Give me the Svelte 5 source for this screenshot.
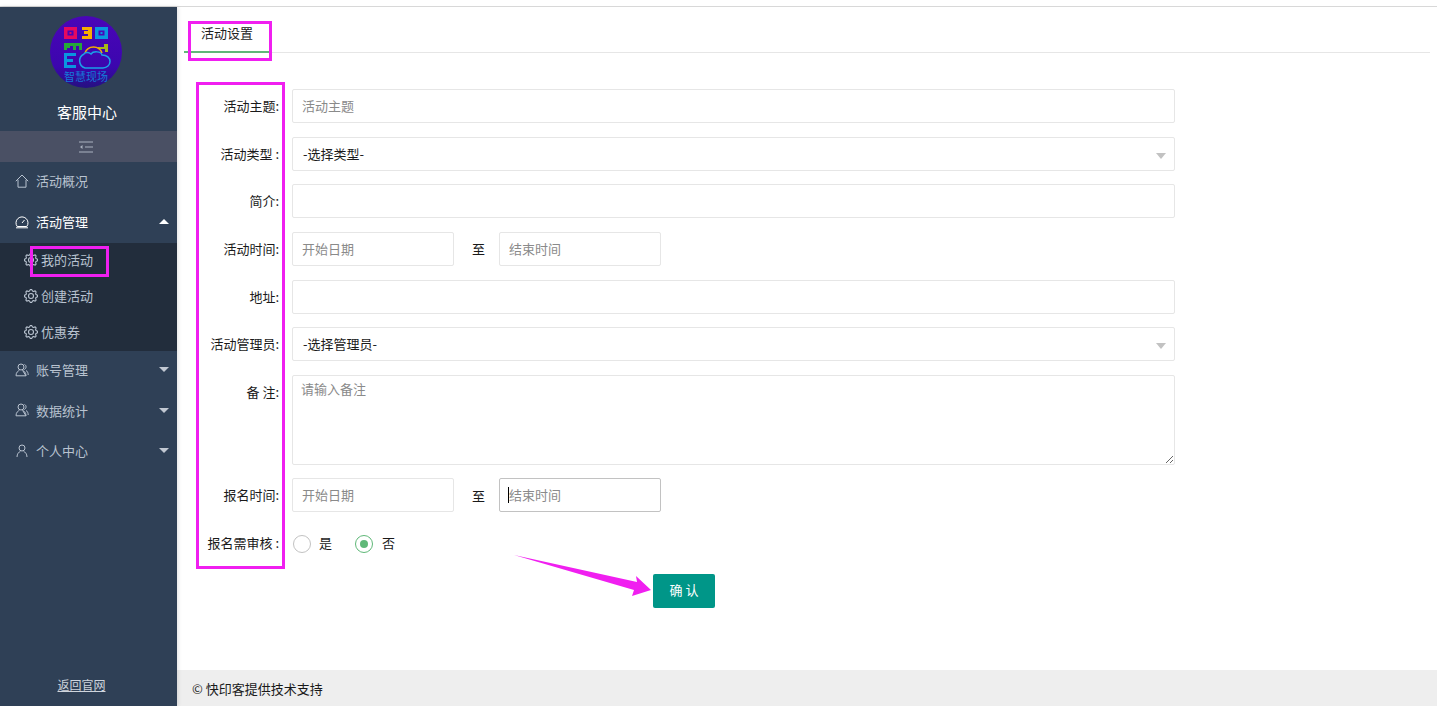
<script>
  const subItems = ['我的活动', '创建活动', '优惠券'];
  const lowerItems = [
    { name: '账号管理', icon: 'users' },
    { name: '数据统计', icon: 'users' },
    { name: '个人中心', icon: 'user' }
  ];

  // outline of a small gear, 8 teeth
  function gearPath() {
    let d = '';
    const n = 8;
    for (let i = 0; i < n * 4; i++) {
      const r = i % 4 < 2 ? 6.6 : 5.2;
      const a = ((i - 0.5) / (n * 4)) * Math.PI * 2;
      d += (i ? 'L' : 'M') + (7 + r * Math.cos(a)).toFixed(2) + ' ' + (7 + r * Math.sin(a)).toFixed(2);
    }
    return d + 'Z';
  }
  const gear = gearPath();
</script>

{#snippet icon(kind)}
  <svg class="icon" viewBox="0 0 14 14" width="14" height="14" fill="none" stroke="currentColor" stroke-width="1">
    {#if kind === 'home'}
      <path d="M.8 7.200 7 1 13.200 7.200M3 5.800v7.400h8V5.800" />
    {:else if kind === 'gauge'}
      <path d="M2.200 11.500a6 6 0 1 1 9.600 0ZM7 8l2.500-3" />
      <path d="M1 12.800h12" />
    {:else if kind === 'users'}
      <circle cx="6" cy="4" r="3" />
      <path d="M1 12.800c0-3.400 2-4.800 3.400-5.400M7.600 7.400c1.400.6 3.400 2 3.400 5.400ZM9.500 1.500c2 .6 2.200 4-.2 5M11 7.500c1.400.6 2.200 2.400 2.200 4.500" />
      <path d="M1 12.800h10" />
    {:else if kind === 'user'}
      <circle cx="7" cy="4" r="3" />
      <path d="M2 13c0-3.200 1.800-5 3.400-5.600M12 13c0-3.200-1.800-5-3.400-5.600" />
    {/if}
  </svg>
{/snippet}

<div class="page">
  <div class="topline"></div>
  <div class="body">
    <aside class="sidebar">
      <div class="logo">
        <svg viewBox="0 0 72 72" width="72" height="72">
          <defs>
            <linearGradient id="disc" x1="0" y1="0" x2="0" y2="1">
              <stop offset="0" stop-color="#4a05b8" />
              <stop offset="0.7" stop-color="#3c06ae" />
              <stop offset="1" stop-color="#251080" />
            </linearGradient>
          </defs>
          <circle cx="36" cy="36" r="36" fill="url(#disc)" />
          <path d="M14 11h13v12H14Z" fill="#e6095f" />
          <path d="M17.500 14.500h6v5h-6Z" fill="#4a05b8" />
          <path d="M19.500 16h2v2h-2Z" fill="#e6095f" />
          <path d="M32 11h10v12H32v-3h6v-2h-4v-3h4v-1h-6Z" fill="#f8ac00" />
          <path d="M45 11h13v12H45Z" fill="#0a96e0" />
          <path d="M48.500 14.500h6v5h-6Z" fill="#4a05b8" />
          <path d="M50.500 16h2v2h-2Z" fill="#0a96e0" />
          <path d="M14 27h18v7h-3v-4h-3v4h-3v-4h-3v2h-3v2h-3Z" fill="#25a838" />
          <path d="M48 31h6v-3h4v8h-3v-3h-7Z" fill="#a5b818" />
          <path d="M14 37h12v3h-9v3h6v3h-6v3h9v3H14Z" fill="#0a96e0" />
          <path d="M35 37a9 9 0 0 1 17 0" fill="none" stroke="#f8ac00" stroke-width="1.500" />
          <path d="M35 52a7.500 7.500 0 0 1-1-14c1-2 5-2 7 0 2-3 10-3 11 1 5 0 8 3 8 6.500S57 52 53 52Z" fill="none" stroke="#1aa0e8" stroke-width="1.500" />
          <text x="36" y="65" class="logo-text">智慧现场</text>
        </svg>
      </div>
      <div class="brand">客服中心</div>
      <div class="toggle">
        <svg viewBox="0 0 14 12" width="14" height="12" fill="none" stroke="#aab2bf" stroke-width="1.200">
          <path d="M0 1h14M6 6h8M0 11h14" />
          <path d="M3.500 4 1 6l2.500 2Z" fill="#aab2bf" stroke="none" />
        </svg>
      </div>

      <nav class="menu">
        <div class="item first">{@render icon('home')}<span>活动概况</span></div>
        <div class="item open">
          {@render icon('gauge')}<span>活动管理</span><i class="caret up"></i>
        </div>
        <div class="sub">
          {#each subItems as name}
            <div class="sub-item">
              <svg class="icon" viewBox="0 0 14 14" width="14" height="14" fill="none" stroke="currentColor" stroke-width="1.100">
                <path d={gear} stroke-linejoin="round" />
                <circle cx="7" cy="7" r="2.500" />
              </svg>
              <span>{name}</span>
            </div>
          {/each}
        </div>
        {#each lowerItems as entry}
          <div class="item">{@render icon(entry.icon)}<span>{entry.name}</span><i class="caret"></i></div>
        {/each}
      </nav>

      <a class="back" href="#top">返回官网</a>
    </aside>

    <main class="main">
      <div class="content">
        <div class="tabs">
          <div class="tab">活动设置</div>
        </div>

        <form class="form" on:submit|preventDefault>
          <div class="row">
            <span class="label">活动主题:</span>
            <input class="field" placeholder="活动主题" />
          </div>
          <div class="row">
            <span class="label">活动类型 :</span>
            <div class="select field">-选择类型-</div>
          </div>
          <div class="row">
            <span class="label">简介:</span>
            <input class="field" />
          </div>
          <div class="row">
            <span class="label">活动时间:</span>
            <input class="field date" placeholder="开始日期" />
            <span class="to">至</span>
            <input class="field date" placeholder="结束时间" />
          </div>
          <div class="row">
            <span class="label">地址:</span>
            <input class="field" />
          </div>
          <div class="row">
            <span class="label">活动管理员:</span>
            <div class="select field">-选择管理员-</div>
          </div>
          <div class="row">
            <span class="label top">备 注:</span>
            <textarea class="field area" placeholder="请输入备注"></textarea>
          </div>
          <div class="row">
            <span class="label">报名时间:</span>
            <input class="field date" placeholder="开始日期" />
            <span class="to">至</span>
            <div class="focused">
              <input class="field date active" placeholder="结束时间" />
              <span class="cursor"></span>
            </div>
          </div>
          <div class="row radios">
            <span class="label">报名需审核 :</span>
            <span class="radio"></span><span class="radio-text">是</span>
            <span class="radio on"></span><span class="radio-text">否</span>
          </div>
          <div class="actions">
            <button class="submit" type="submit">确 认</button>
          </div>
        </form>
      </div>

      <footer class="footer">© 快印客提供技术支持</footer>
    </main>
  </div>

  <!-- annotations lying over the page -->
  <div class="mark mark-tab"></div>
  <div class="mark mark-labels"></div>
  <div class="mark mark-sub"></div>
  <svg class="arrow" viewBox="0 0 1437 706" width="1437" height="706">
    <path d="M514 555 637 582 636 576 651 590 632 596 634 590Z" fill="#f01ff0" />
  </svg>
</div>

<style>
  :global(body) {
    margin: 0;
    overflow: hidden;
    background: #fff;
  }

  .page {
    position: relative;
    height: 706px;
    display: flex;
    flex-direction: column;
    font-family: 'Noto Sans CJK SC', 'Noto Sans', sans-serif;
    font-size: 13px;
    color: #222;
  }

  .topline {
    height: 6px;
    flex: none;
    border-bottom: 1px solid #d8d8d8;
  }

  .body {
    flex: 1;
    display: flex;
    min-height: 0;
  }

  .sidebar {
    width: 177px;
    flex: none;
    display: flex;
    flex-direction: column;
    background: #2f4056;
    box-shadow: 1px 0 4px rgba(0, 0, 0, 0.12);
    position: relative;
    color: #b9c3d0;
  }

  .logo {
    display: flex;
    justify-content: center;
    padding: 9px 5px 0 0;
    height: 72px;
  }

  .logo-text {
    font-size: 11px;
    fill: #1478d8;
    text-anchor: middle;
  }

  .brand {
    margin-top: 14px;
    height: 29px;
    line-height: 20px;
    padding-right: 3px;
    text-align: center;
    font-size: 15px;
    color: #fff;
  }

  .toggle {
    height: 31px;
    display: flex;
    align-items: center;
    justify-content: center;
    padding-right: 5px;
    background: #4a5064;
  }

  .menu {
    display: flex;
    flex-direction: column;
  }

  .item {
    height: 40.500px;
    box-sizing: border-box;
    display: flex;
    align-items: center;
    padding: 0 8px 3px 15px;
    gap: 7px;
  }

  .item.first {
    height: 41px;
    padding-bottom: 4px;
  }

  .item.open {
    height: 40px;
    color: #fff;
  }

  .item span,
  .sub-item span {
    flex: none;
  }

  .icon {
    flex: none;
  }

  .caret {
    margin-left: auto;
    border: 5.500px solid transparent;
    border-top-color: #c2c8d2;
    border-bottom-width: 0;
  }

  .caret.up {
    border-top-width: 0;
    border-bottom: 5.500px solid #fff;
  }

  .sub {
    background: #222d3c;
  }

  .sub-item {
    height: 36px;
    box-sizing: border-box;
    display: flex;
    align-items: center;
    gap: 3px;
    padding: 0 0 3px 24px;
  }

  .back {
    margin-top: auto;
    margin-bottom: 13px;
    text-align: center;
    padding-right: 14px;
    font-size: 12px;
    color: #cfd5dd;
  }

  .main {
    flex: 1;
    min-width: 0;
    display: flex;
    flex-direction: column;
  }

  .content {
    flex: 1;
    padding: 0 7px;
  }

  .tabs {
    margin-top: 8px;
    height: 37px;
    border-bottom: 1px solid #e6e6e6;
  }

  .tab {
    width: 86px;
    height: 38px;
    box-sizing: border-box;
    padding: 8px 0 0 17px;
    line-height: 20px;
    border-bottom: 2px solid #5fb878;
  }

  .form {
    width: 1000px;
    margin-top: 36px;
    display: flex;
    flex-direction: column;
    gap: 13.650px;
  }

  .row {
    display: flex;
    align-items: center;
  }

  .label {
    width: 95px;
    margin-right: 13px;
    padding-bottom: 1px;
    flex: none;
    text-align: right;
    color: #1a1a1a;
    white-space: pre;
  }

  .label.top {
    align-self: flex-start;
    padding-top: 7px;
  }

  .field {
    box-sizing: border-box;
    width: 883px;
    height: 34px;
    padding: 0 9px 1px;
    border: 1px solid #e6e6e6;
    border-radius: 2px;
    background: #fff;
    font: inherit;
    color: #1a1a1a;
    outline: none;
  }

  .field::placeholder {
    color: #8a8a8a;
    opacity: 1;
  }

  .select {
    position: relative;
    display: flex;
    align-items: center;
    padding-left: 10px;
  }

  .select::after {
    content: '';
    position: absolute;
    right: 8px;
    top: 15px;
    border: 5px solid transparent;
    border-top: 6px solid #c2c2c2;
    border-bottom-width: 0;
  }

  .date {
    width: 162px;
  }

  .date.active {
    border-color: #c2c2c2;
  }

  .to {
    width: 45px;
    box-sizing: border-box;
    padding-left: 4px;
    text-align: center;
    color: #1a1a1a;
  }

  .focused {
    position: relative;
    display: flex;
  }

  .cursor {
    position: absolute;
    left: 9px;
    top: 9px;
    width: 1px;
    height: 16px;
    background: #000;
  }

  .area {
    height: 90px;
    padding: 3px 8px 0;
    resize: vertical;
    display: block;
  }

  .radios {
    height: 32px;
    margin-top: 2px;
  }

  .radios .label {
    padding-bottom: 3px;
  }

  .radio {
    width: 18px;
    height: 18px;
    box-sizing: border-box;
    flex: none;
    border: 1px solid #c2c2c2;
    border-radius: 50%;
    margin-left: 1px;
    position: relative;
  }

  .radio.on {
    border-color: #5fb878;
  }

  .radio.on::after {
    content: '';
    position: absolute;
    inset: 4px;
    border-radius: 50%;
    background: #5fb878;
  }

  .radio-text {
    margin: 0 22px 0 8px;
    padding-bottom: 3px;
    color: #1a1a1a;
  }

  .radio.on + .radio-text {
    margin-left: 9px;
  }

  .actions {
    padding-left: 469px;
  }

  .submit {
    width: 62px;
    height: 34px;
    border: 0;
    border-radius: 2px;
    background: #009688;
    color: #fff;
    font: inherit;
    padding: 0 0 2px;
  }

  .footer {
    height: 36px;
    flex: none;
    display: flex;
    align-items: center;
    padding-left: 15px;
    background: #eee;
    color: #1a1a1a;
  }

  .mark {
    position: absolute;
    box-sizing: border-box;
    border: 3px solid #f01ff0;
    pointer-events: none;
  }

  .mark-tab {
    left: 188px;
    top: 21px;
    width: 84px;
    height: 40px;
  }

  .mark-labels {
    left: 196px;
    top: 82px;
    width: 89px;
    height: 487px;
  }

  .mark-sub {
    left: 30px;
    top: 246px;
    width: 79px;
    height: 31px;
  }

  .arrow {
    position: absolute;
    left: 0;
    top: 0;
    pointer-events: none;
  }
</style>
